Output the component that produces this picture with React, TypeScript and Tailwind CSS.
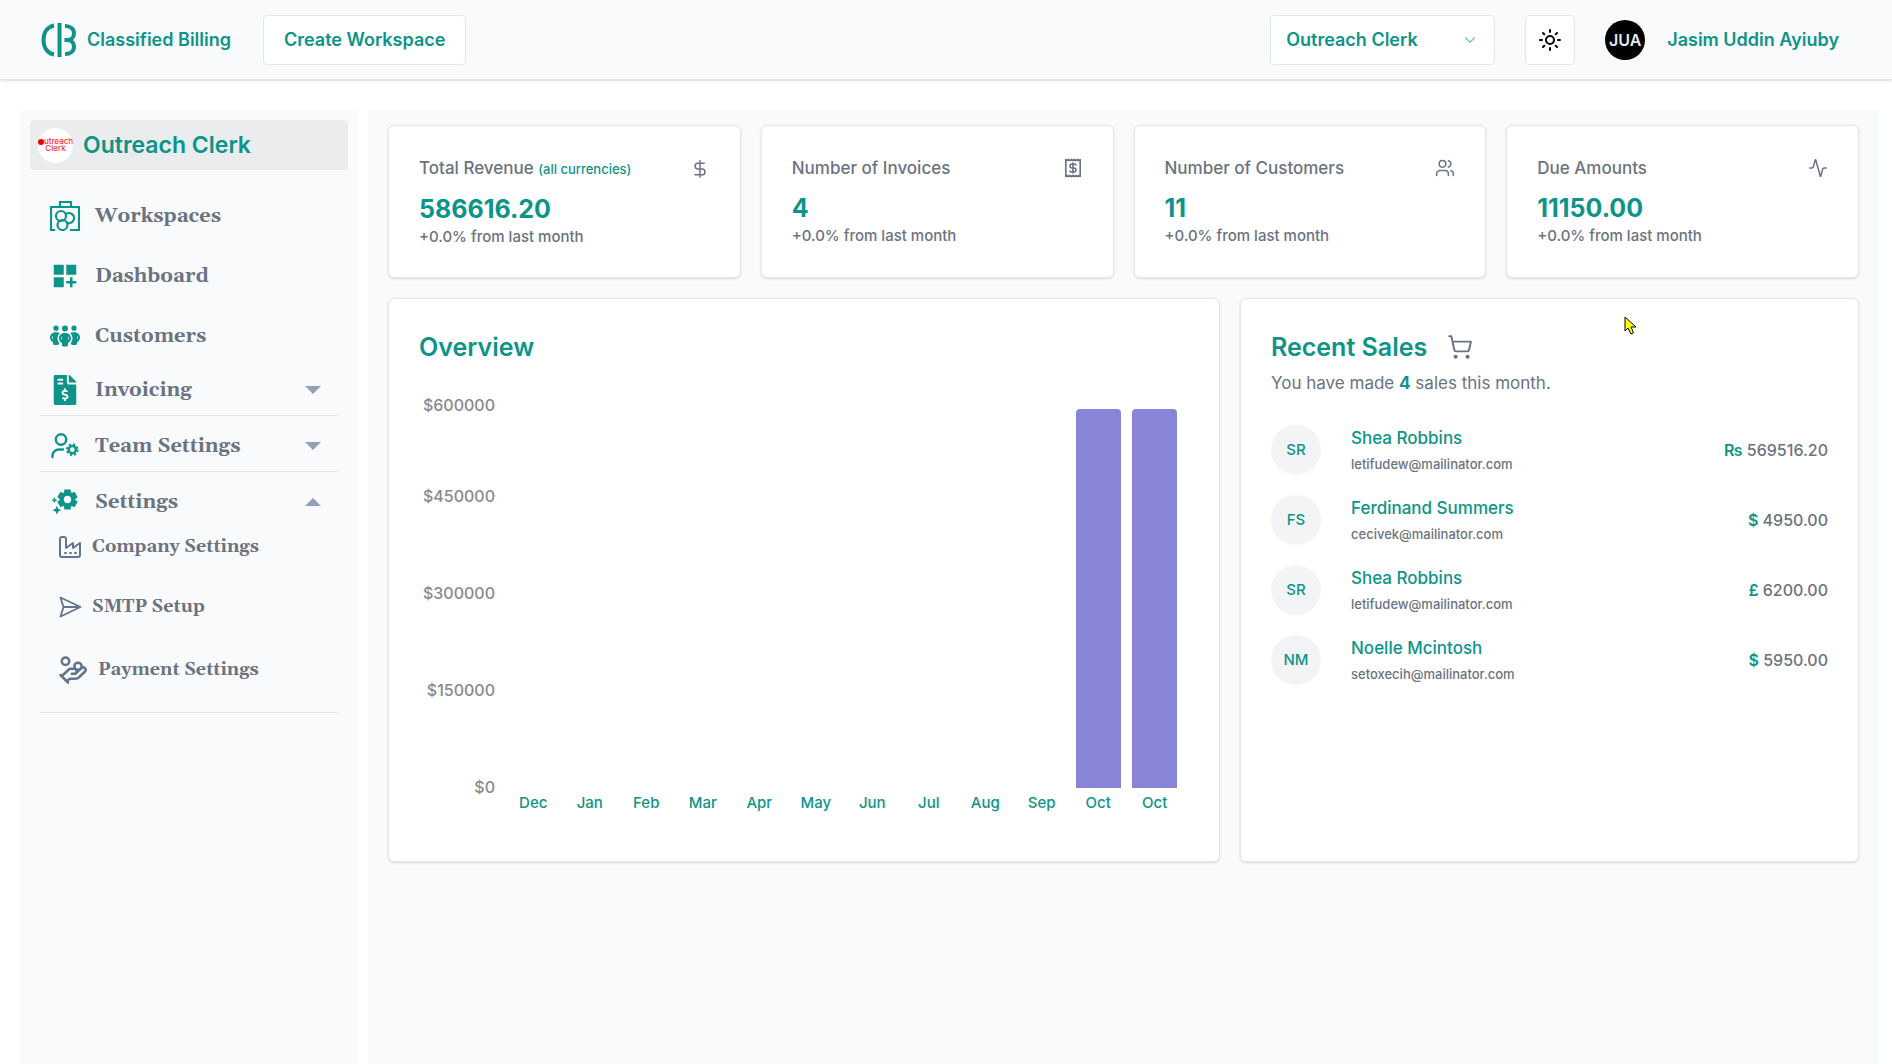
import type { ReactNode } from 'react';
import { Activity, ChevronDown, DollarSign, HandCoins, ShoppingCart, Users } from 'lucide-react';
import { FaFileInvoiceDollar } from 'react-icons/fa';
import { FaPeopleGroup } from 'react-icons/fa6';
import { LuFactory } from 'react-icons/lu';
import { MdDashboardCustomize, MdSettingsSuggest } from 'react-icons/md';

const MAX_VALUE = 600000;

const overview = [
    { month: 'Dec', total: 0 },
    { month: 'Jan', total: 0 },
    { month: 'Feb', total: 0 },
    { month: 'Mar', total: 0 },
    { month: 'Apr', total: 0 },
    { month: 'May', total: 0 },
    { month: 'Jun', total: 0 },
    { month: 'Jul', total: 0 },
    { month: 'Aug', total: 0 },
    { month: 'Sep', total: 0 },
    { month: 'Oct', total: 586616.2 },
    { month: 'Oct', total: 586616.2 },
];

const sales = [
    { initials: 'SR', name: 'Shea Robbins', email: 'letifudew@mailinator.com', symbol: '₨', amount: '569516.20' },
    { initials: 'FS', name: 'Ferdinand Summers', email: 'cecivek@mailinator.com', symbol: '$', amount: '4950.00' },
    { initials: 'SR', name: 'Shea Robbins', email: 'letifudew@mailinator.com', symbol: '£', amount: '6200.00' },
    { initials: 'NM', name: 'Noelle Mcintosh', email: 'setoxecih@mailinator.com', symbol: '$', amount: '5950.00' },
];

function BrandLogo() {
    return (
        <svg viewBox="0 0 36 34" className="w-9 h-[34px]" fill="none" stroke="#0d9488" strokeWidth="4">
            <path d="M13 2.5C6 4 2.5 10 2.5 17S6 30 13 31.5" />
            <path d="M18.5 0v34" />
            <path d="M24 3c5.5 0 9 3 9 7.5 0 4-3 6.5-7 6.5h-2.5M24 31c5.5 0 9-3 9-7.5 0-4-3-6.5-7-6.5" />
        </svg>
    );
}

function SunIcon() {
    return (
        <svg viewBox="0 0 24 24" className="size-6" fill="none" stroke="currentColor" strokeWidth="2" strokeLinecap="round">
            <circle cx="12" cy="12" r="4" />
            <path d="M12 2v2M12 20v2M2 12h2M20 12h2M5 5l1.3 1.3M17.7 17.7L19 19M5 19l1.3-1.3M17.7 6.3L19 5" />
        </svg>
    );
}

function WorkspaceIcon() {
    return (
        <svg viewBox="0 0 30 30" className="size-[30px]" fill="none" stroke="currentColor" strokeWidth="2.2">
            <path d="M5 29H1V6h28v23h-9M10 6V1h11v5" />
            <circle cx="11" cy="15" r="5" />
            <path d="M15.5 13.5A5 5 0 1 1 16 21" />
            <circle cx="12.5" cy="24" r="5" />
        </svg>
    );
}

function TeamIcon() {
    return (
        <svg viewBox="0 0 30 30" className="size-[30px]" fill="none" stroke="currentColor" strokeWidth="2.4">
            <circle cx="11" cy="8.5" r="5.2" />
            <path d="M2.5 26v-1.5a6.5 6.5 0 0 1 6.5-6h4" strokeLinecap="round" />
            <circle cx="22.3" cy="18.7" r="3.6" />
            <circle cx="22.3" cy="18.7" r="5.4" strokeWidth="1.8" strokeDasharray="2.4 1.841" />
        </svg>
    );
}

function ReceiptIcon() {
    return (
        <svg viewBox="0 0 20 20" className="size-5" fill="none" stroke="currentColor" strokeWidth="1.6">
            <path d="M2.8 1v18M17.2 1v18" />
            <path d="M2.5 1.5l1.5 1 1.5-1 1.5 1 1.5-1 1.5 1 1.5-1 1.5 1 1.5-1 1.5 1 1.5-1M2.5 18.5l1.5-1 1.5 1 1.5-1 1.5 1 1.5-1 1.5 1 1.5-1 1.5 1 1.5-1 1.5 1" />
            <path d="M13 7.5c0-1-.8-1.5-1.8-1.5H9c-2.6 0-2.6 4 0 4h2c2.6 0 2.6 4 0 4H8.8c-1 0-1.8-.5-1.8-1.5M10 4.5v11" />
        </svg>
    );
}

function SendIcon() {
    return (
        <svg viewBox="0 0 24 24" className="size-6 text-slate-500" fill="none" stroke="currentColor" strokeWidth="1.8" strokeLinejoin="round">
            <path d="M2.5 2.5L22.5 12l-20 9.5L5.5 12zM5.5 12h17" />
        </svg>
    );
}

interface NavLinkProps {
    icon: ReactNode;
    label: string;
}

function NavLink({ icon, label }: NavLinkProps) {
    return (
        <a href="#" className="flex items-center gap-[15px] h-[60px] px-2.5 text-xl text-[#0d9488]">
            {icon}
            <span className="text-[#6b7280]">{label}</span>
        </a>
    );
}

function NavGroup({ icon, label, open = false }: NavLinkProps & { open?: boolean }) {
    return (
        <button type="button" aria-expanded={open} className="flex items-center w-full h-[30px] px-2.5 text-xl text-[#0d9488]">
            {icon}
            <span className="ml-[15px] mr-auto text-[#6b7280]">{label}</span>
            <svg viewBox="0 0 16 8" className={`w-4 h-2 mr-[7px] fill-slate-400 ${open ? 'rotate-180' : ''}`}>
                <path d="M0 0h16L8 8z" />
            </svg>
        </button>
    );
}

interface StatCardProps {
    title: string;
    note?: string;
    value: string;
    icon: ReactNode;
}

function StatCard({ title, note, value, icon }: StatCardProps) {
    return (
        <div className="bg-white border border-gray-200 rounded-md shadow-sm p-[30px]">
            <div className="flex items-center justify-between mb-2.5">
                <h3 className="text-[17px] leading-6 font-medium text-[#6b7280]">
                    {title} {note && <span className="text-[13px] text-[#0d9488]">{note}</span>}
                </h3>
                <span className="text-[#6b7280]">{icon}</span>
            </div>
            <p className="text-[25px] leading-9 font-bold text-[#0d9488]">{value}</p>
            <p className="text-[15px] leading-5 font-medium text-[#6b7280]">+0.0% from last month</p>
        </div>
    );
}

function Header() {
    return (
        <header className="flex items-center h-20 pl-[41px] pr-[53px] bg-[#f9fafc] border-b border-gray-200 shadow text-lg font-semibold text-[#0d9488]">
            <a href="#" className="flex items-center gap-2.5">
                <BrandLogo />
                Classified Billing
            </a>
            <button type="button" className="ml-8 h-[50px] px-5 bg-white border border-gray-200 rounded">
                Create Workspace
            </button>
            <div className="flex items-center gap-[30px] ml-auto">
                <div className="relative">
                    <select aria-label="Workspace" className="appearance-none w-[225px] h-[50px] px-[15px] bg-white border border-gray-200 rounded">
                        <option>Outreach Clerk</option>
                    </select>
                    <ChevronDown className="absolute right-4 top-4 size-[18px] text-[#0d9488]/60 pointer-events-none" strokeWidth={1.5} />
                </div>
                <button type="button" aria-label="Toggle theme" className="flex items-center justify-center size-[50px] bg-white border border-gray-200 rounded text-gray-950">
                    <SunIcon />
                </button>
                <div className="flex items-center gap-[22px]">
                    <span className="flex items-center justify-center size-10 rounded-full bg-black text-base text-slate-200">JUA</span>
                    <span>Jasim Uddin Ayiuby</span>
                </div>
            </div>
        </header>
    );
}

function Sidebar() {
    return (
        <aside className="w-[338px] shrink-0 p-2.5 bg-[#f9fafc]">
            <div className="flex items-center gap-2.5 h-[50px] px-2 mb-4 bg-[#eaecee] rounded">
                <span className="flex flex-col items-center justify-center size-[35px] rounded-full bg-white text-[8px] leading-[7px] font-medium text-red-500">
                    <span className="flex items-center">
                        <span className="size-1.5 rounded-full bg-red-600" />
                        utreach
                    </span>
                    <span>Clerk</span>
                </span>
                <span className="text-[23px] font-semibold text-[#0d9488]">Outreach Clerk</span>
            </div>
            <nav className="px-2.5 font-bold font-['Gelasio','Georgia','Liberation_Serif',serif]">
                <NavLink icon={<WorkspaceIcon />} label="Workspaces" />
                <NavLink icon={<MdDashboardCustomize className="size-[30px]" />} label="Dashboard" />
                <NavLink icon={<FaPeopleGroup className="size-[30px]" />} label="Customers" />
                <div className="pt-[9px] pb-2.5 border-b border-gray-200">
                    <NavGroup icon={<FaFileInvoiceDollar className="size-[30px]" />} label="Invoicing" />
                </div>
                <div className="pt-[15px] pb-2.5 border-b border-gray-200">
                    <NavGroup icon={<TeamIcon />} label="Team Settings" />
                </div>
                <div className="pt-[15px] pb-2.5 border-b border-gray-200">
                    <NavGroup open icon={<MdSettingsSuggest className="size-[30px] rotate-180" />} label="Settings" />
                    <a href="#" className="flex items-center gap-2.5 h-[60px] pl-[18px] text-lg text-[#6b7280]">
                        <LuFactory className="size-6 text-slate-500" />
                        Company Settings
                    </a>
                    <a href="#" className="flex items-center gap-2.5 h-[60px] pl-[18px] text-lg text-[#6b7280]">
                        <SendIcon />
                        SMTP Setup
                    </a>
                    <a href="#" className="flex items-center gap-2.5 h-[65px] pl-[18px] text-lg text-[#6b7280]">
                        <HandCoins className="size-[30px] text-slate-500" />
                        Payment Settings
                    </a>
                </div>
            </nav>
        </aside>
    );
}

function Overview() {
    return (
        <section className="col-span-4 bg-white border border-gray-200 rounded-md shadow-sm px-[30px] pt-[30px] pb-12">
            <h2 className="text-[25px] leading-9 font-semibold text-[#0d9488]">Overview</h2>
            <div className="flex gap-2.5 mt-[30px] pr-1.5 font-medium">
                <div className="flex flex-col w-[76px] text-base leading-5 text-right text-[#888888]">
                    <span>$600000</span>
                    <span className="flex items-end justify-end h-[91px]">$450000</span>
                    <span className="flex items-end justify-end h-[97px]">$300000</span>
                    <span className="flex items-end justify-end h-[97px]">$150000</span>
                    <span className="flex items-end justify-end h-[97px]">$0</span>
                </div>
                <div className="grid grid-cols-12 flex-1 text-[15px] leading-5">
                    {overview.map(({ month, total }, i) => (
                        <div key={i} className="flex flex-col items-center pt-[5px] text-[#0d9488]">
                            <div className="flex items-end w-4/5 h-[388px] mb-[5px]">
                                <div className="w-full bg-[#8884d8] rounded-t" style={{ height: `${(total / MAX_VALUE) * 100}%` }} />
                            </div>
                            {month}
                        </div>
                    ))}
                </div>
            </div>
        </section>
    );
}

function RecentSales() {
    return (
        <section className="relative col-span-3 bg-white border border-gray-200 rounded-md shadow-sm p-[30px]">
            <h2 className="flex items-center gap-5 text-[25px] leading-9 font-semibold text-[#0d9488]">
                Recent Sales
                <ShoppingCart className="size-[26px] text-[#6b7280]" strokeWidth={1.8} />
            </h2>
            <p className="mt-1.5 text-[17px] leading-6 text-[#6b7280]">
                You have made <b className="text-[#0d9488]">4</b> sales this month.
            </p>
            <ul className="flex flex-col gap-5 mt-[30px]">
                {sales.map((sale, i) => (
                    <li key={i} className="flex items-center font-medium">
                        <span className="flex items-center justify-center size-[50px] rounded-full bg-gray-100 text-[15px] text-[#0d9488]">
                            {sale.initials}
                        </span>
                        <div className="ml-[30px]">
                            <p className="text-[17px] leading-6 text-[#0d9488]">{sale.name}</p>
                            <p className="mt-1 text-[13px] leading-5 text-[#6b7280]">{sale.email}</p>
                        </div>
                        <p className="ml-auto text-base text-[#6b7280]">
                            <span className="font-semibold text-[#0d9488]">{sale.symbol}</span> {sale.amount}
                        </p>
                    </li>
                ))}
            </ul>
            <svg viewBox="0 0 13 19" className="absolute right-[221px] top-[17px] w-[13px] h-[19px]">
                <path d="M1 1v14l3-3 3 6 2.5-1.2L7 11h5z" fill="#ffff00" stroke="#000000" />
            </svg>
        </section>
    );
}

export default function App() {
    return (
        <div className="flex flex-col min-h-screen bg-white font-['Inter','Liberation_Sans',sans-serif]">
            <Header />
            <div className="flex flex-1 gap-2.5 pt-[30px] pl-5 pr-[13px]">
                <Sidebar />
                <main className="flex-1 px-5 pt-[15px] pb-5 bg-[#f9fafc]">
                    <div className="grid grid-cols-4 gap-5">
                        <StatCard title="Total Revenue" note="(all currencies)" value="586616.20" icon={<DollarSign className="size-5" strokeWidth={1.8} />} />
                        <StatCard title="Number of Invoices" value="4" icon={<ReceiptIcon />} />
                        <StatCard title="Number of Customers" value="11" icon={<Users className="size-5" strokeWidth={1.8} />} />
                        <StatCard title="Due Amounts" value="11150.00" icon={<Activity className="size-5" strokeWidth={1.8} />} />
                    </div>
                    <div className="grid grid-cols-7 gap-5 mt-5">
                        <Overview />
                        <RecentSales />
                    </div>
                </main>
            </div>
        </div>
    );
}
